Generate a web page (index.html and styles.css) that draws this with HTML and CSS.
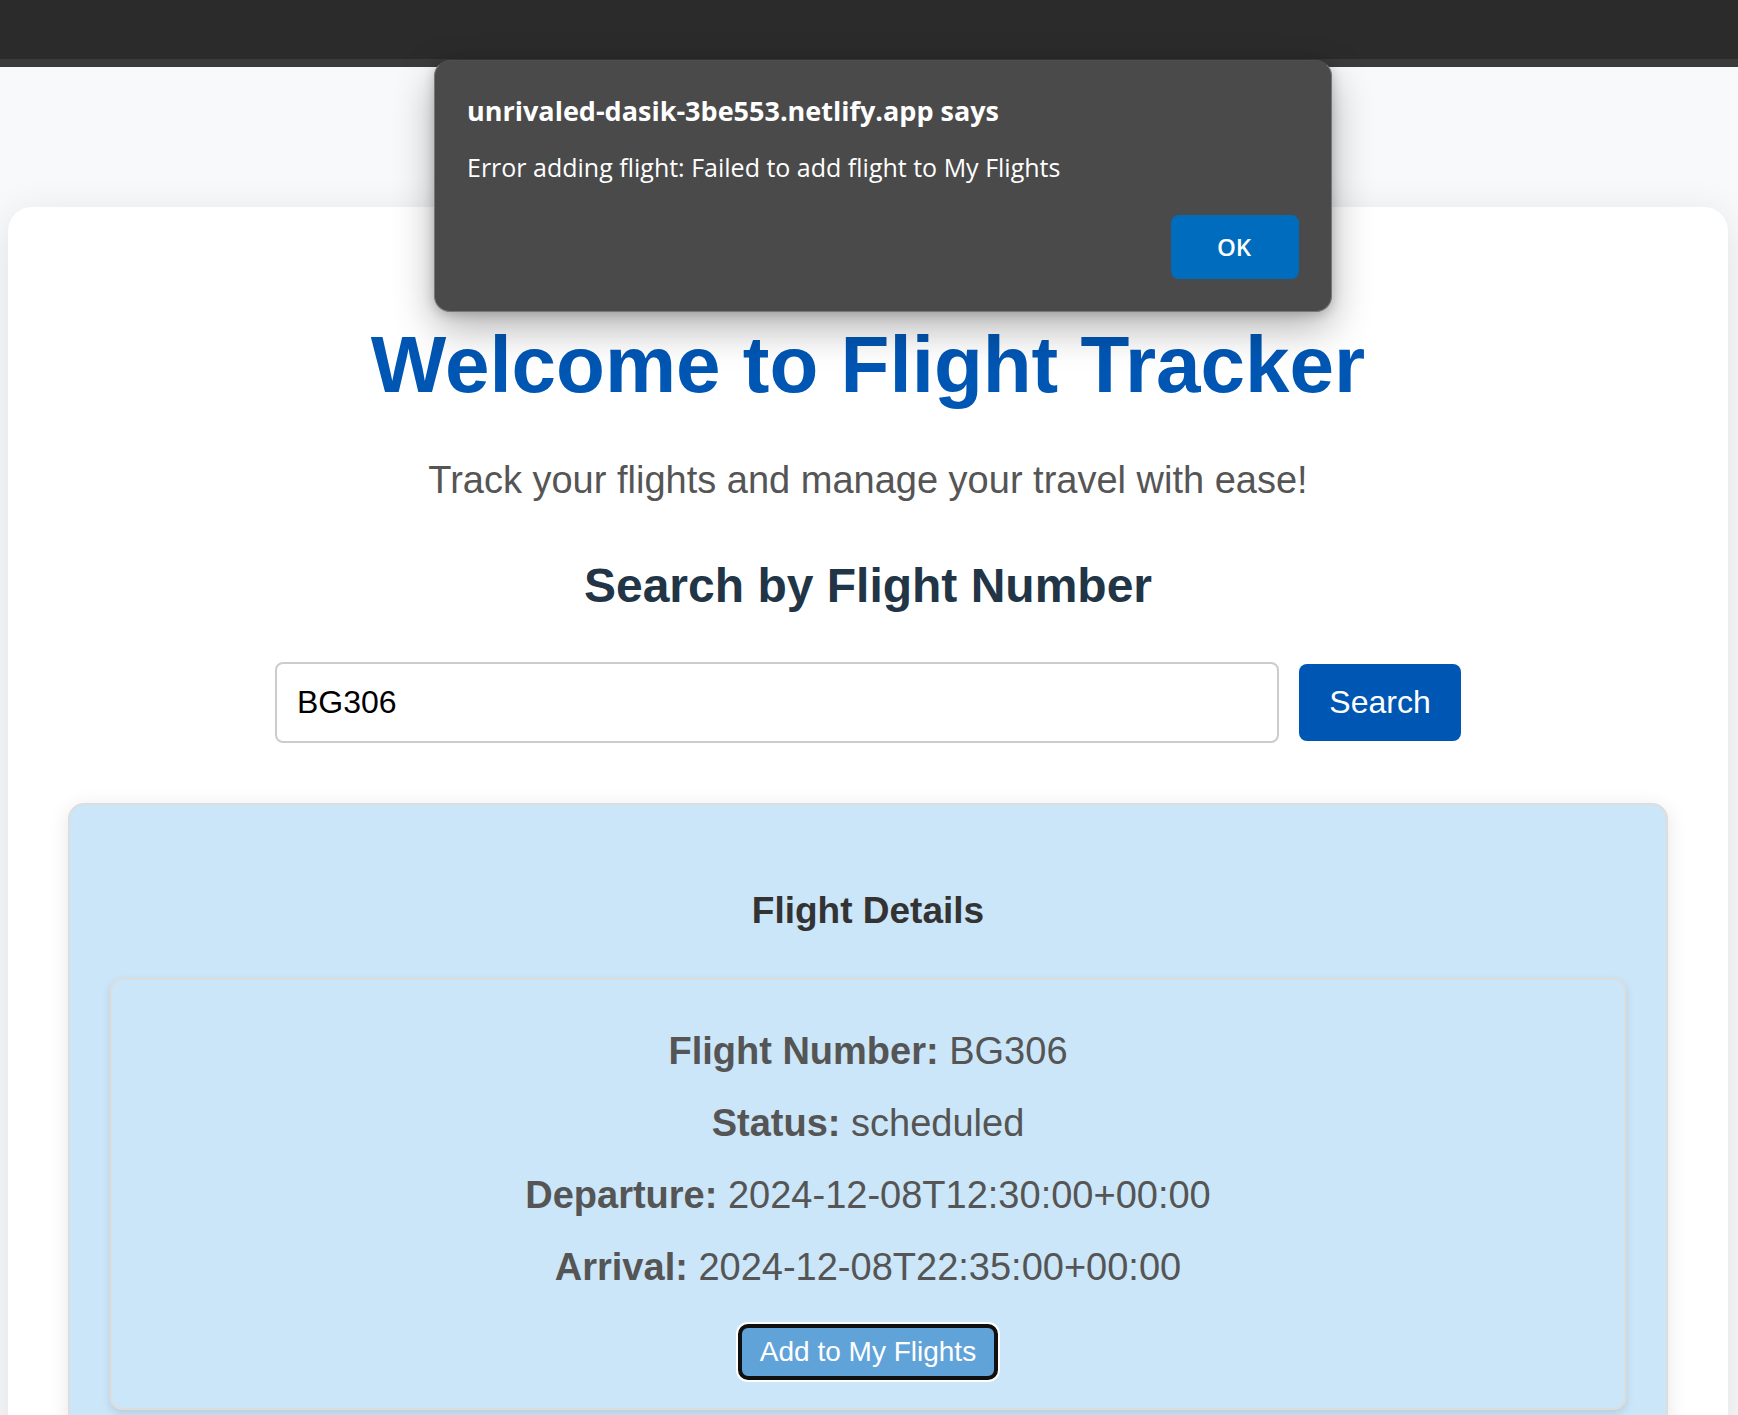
FILE: index.html
```html
<!DOCTYPE html>
<html lang="en">
<head>
  <meta charset="utf-8">
  <title>Flight Tracker</title>
  <link rel="stylesheet" href="styles.css">
</head>
<body>
  <div class="browser-bar"></div>

  <main class="container">
    <h1 class="title">Welcome to Flight Tracker</h1>
    <p class="text">Track your flights and manage your travel with ease!</p>
    <h2 class="subtitle" id="search-title">Search by Flight Number</h2>
    <form class="search">
      <input class="search-input" type="text" value="BG306" aria-labelledby="search-title">
      <button class="search-button" type="button">Search</button>
    </form>

    <section class="results">
      <h3 class="results-title">Flight Details</h3>
      <article class="flight">
        <p class="text"><strong>Flight Number:</strong> BG306</p>
        <p class="text"><strong>Status:</strong> scheduled</p>
        <p class="text"><strong>Departure:</strong> 2024-12-08T12:30:00+00:00</p>
        <p class="text"><strong>Arrival:</strong> 2024-12-08T22:35:00+00:00</p>
        <button class="add-button" type="button">Add to My Flights</button>
      </article>
    </section>
  </main>

  <div class="dialog" role="alertdialog" aria-labelledby="dialog-title" aria-describedby="dialog-message">
    <div class="dialog-title" id="dialog-title">unrivaled-dasik-3be553.netlify.app says</div>
    <div class="dialog-message" id="dialog-message">Error adding flight: Failed to add flight to My Flights</div>
    <button class="dialog-button" type="button">OK</button>
  </div>
</body>
</html>
```

FILE: styles.css
```css
* {
  box-sizing: border-box;
}

body {
  margin: 0;
  height: 100vh;
  overflow: hidden;
  background: #f8f9fb;
  color: #333;
  font-family: "Liberation Sans", Arial, sans-serif;
  text-align: center;
}

.browser-bar {
  height: 67px;
  background: #2b2b2b;
  border-bottom: 8px solid #3b3b3b;
}

.container {
  margin: 140px 10px 0 8px;
  padding: 112px 60px 60px;
  background: #fff;
  border-radius: 24px;
  box-shadow: 0 8px 40px rgba(0, 0, 0, 0.1);
}

.title {
  margin: 0 0 38px;
  color: #0056b3;
  font-size: 80px;
  line-height: 92px;
}

.text {
  margin: 0;
  color: #555;
  font-size: 38px;
  line-height: 62px;
}

.subtitle {
  margin: 47px 0 48px;
  color: #213547;
  font-size: 48px;
  line-height: 56px;
}

.search {
  display: flex;
  align-items: center;
  gap: 20px;
  max-width: 1186px;
  margin: 0 auto 60px;
}

.search-input {
  flex: 1;
  min-width: 0;
  height: 81px;
  padding: 0 20px;
  background: #fff;
  border: 2px solid #ccc;
  border-radius: 8px;
  color: #000;
  font: 32px "Liberation Sans", Arial, sans-serif;
}

.search-button {
  width: 162px;
  height: 77px;
  padding: 0;
  background: #0056b3;
  border: 0;
  border-radius: 8px;
  color: #fff;
  font: 32px "Liberation Sans", Arial, sans-serif;
}

.results {
  padding: 84px 40px 60px;
  background: #cbe6f8;
  border: 2px solid #ddd;
  border-radius: 16px;
  box-shadow: 0 4px 20px rgba(0, 0, 0, 0.1);
}

.results-title {
  margin: 0 0 46px;
  font-size: 37px;
  line-height: 43px;
}

.flight {
  display: flex;
  flex-direction: column;
  align-items: center;
  gap: 10px;
  padding: 40px 40px 28px;
  border: 2px solid #ddd;
  border-radius: 12px;
  background: #cbe6f8;
  box-shadow: 0 4px 10px rgba(0, 0, 0, 0.1);
}

.add-button {
  height: 56px;
  margin-top: 16px;
  padding: 0 18px;
  background: #60a3d9;
  border: 4px solid #101010;
  border-radius: 10px;
  box-shadow: 0 0 0 2px #fff;
  color: #fff;
  font: 28px "Liberation Sans", Arial, sans-serif;
}

/* Browser alert, laid over the page */
.dialog {
  position: absolute;
  top: 60px;
  left: 434px;
  display: flex;
  flex-direction: column;
  width: 898px;
  padding: 32px;
  background: #4a4a4a;
  border: 1px solid #777;
  border-top-color: #4f4f4f;
  border-radius: 16px;
  box-shadow: 0 16px 40px rgba(0, 0, 0, 0.3), 0 2px 12px rgba(0, 0, 0, 0.2);
  color: #fff;
  font-family: "Open Sans", "Noto Sans", sans-serif;
  text-align: left;
}

.dialog-title {
  font-size: 27px;
  font-weight: 700;
  line-height: 36px;
}

.dialog-message {
  margin: 20px 0 30px;
  font-size: 25px;
  line-height: 36px;
}

.dialog-button {
  align-self: flex-end;
  width: 128px;
  height: 64px;
  padding: 0 2px 2px 0;
  background: #006cbe;
  border: 0;
  border-radius: 8px;
  color: #fff;
  font: 600 24px "Open Sans", "Noto Sans", sans-serif;
}
```
